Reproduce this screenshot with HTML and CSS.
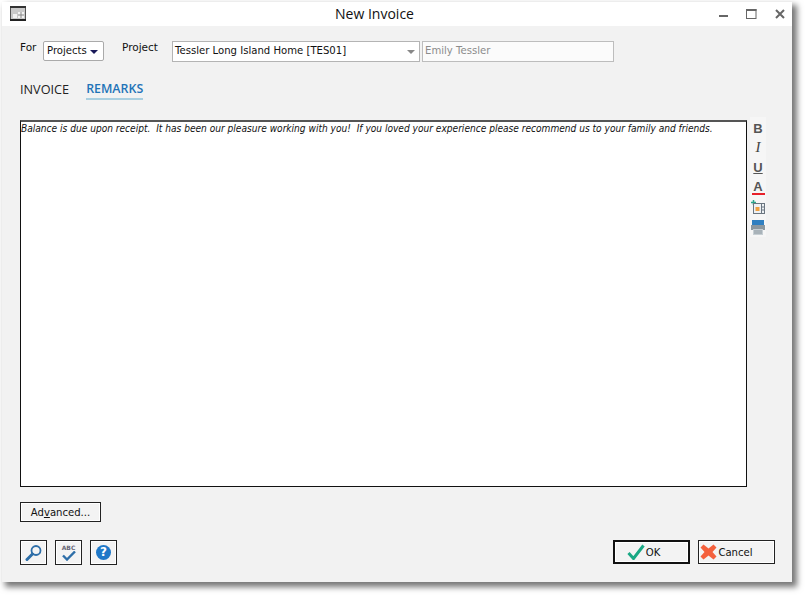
FILE: index.html
```html
<!DOCTYPE html>
<html lang="en">
<head>
<meta charset="utf-8">
<title>New Invoice</title>
<link rel="stylesheet" href="styles.css">
</head>
<body>
<div class="window">
  <header class="titlebar">
    <svg class="app-icon" width="16" height="15" viewBox="0 0 16 15"><rect x="0.5" y="0.5" width="15" height="14" fill="#c9c9c9" stroke="#555"/><rect x="0" y="0" width="16" height="2" fill="#333"/><rect x="0" y="13" width="16" height="2" fill="#222"/><rect x="8" y="6" width="6" height="6" fill="#f2f2f2"/><rect x="3" y="8" width="4" height="4" fill="#f2f2f2"/><path d="M8 9h6M11 6v6" stroke="#888" stroke-width="1"/></svg>
    <div class="title">New Invoice</div>
    <div class="win-controls">
      <svg width="10" height="10" viewBox="0 0 10 10"><rect x="0" y="6" width="9" height="2" fill="#666"/></svg>
      <svg width="11" height="11" viewBox="0 0 11 11"><rect x="0.500" y="0.500" width="9.500" height="9" fill="none" stroke="#666"/><rect x="0" y="0" width="10.500" height="2" fill="#666"/></svg>
      <svg width="10" height="10" viewBox="0 0 10 10"><path d="M1 1l8 8M9 1l-8 8" stroke="#666" stroke-width="2"/></svg>
    </div>
  </header>
  <main class="content">
    <div class="top-row">
      <span class="label label-for">For</span>
      <div class="select"><span>Projects</span><i class="caret caret-dark"></i></div>
      <span class="label label-project">Project</span>
      <div class="combo"><span>Tessler Long Island Home [TES01]</span><i class="caret"></i></div>
      <div class="readonly">Emily Tessler</div>
    </div>
    <nav class="tabs">
      <span class="tab">INVOICE</span>
      <span class="tab tab-active">REMARKS</span>
    </nav>
    <div class="editor-row">
      <div class="editor">Balance is due upon receipt.&nbsp; It has been our pleasure working with you!&nbsp; If you loved your experience please recommend us to your family and friends.</div>
      <div class="toolbar">
        <span class="tool tool-b">B</span>
        <span class="tool tool-i">I</span>
        <span class="tool tool-u">U</span>
        <span class="tool tool-a">A</span>
        <span class="tool"><svg width="14" height="14" viewBox="0 0 14 14"><path d="M0 2.500h5M2.500 0v5" stroke="#2aa58a" stroke-width="1.500"/><rect x="2.500" y="3.500" width="11" height="10" fill="#eef1f4" stroke="#6b7680"/><rect x="4.500" y="7" width="4" height="4" fill="#f0a040"/><path d="M10.500 4v9M10.500 7h3M10.500 10h3" stroke="#6b7680"/></svg></span>
        <span class="tool"><svg width="14" height="15" viewBox="0 0 14 15"><rect x="1" y="0" width="12" height="5" fill="#2f7fc1"/><rect x="0" y="5" width="14" height="5" fill="#8b979f"/><rect x="2" y="9" width="10" height="6" fill="#c6ced3"/><path d="M3 11h8M3 13h8" stroke="#8b979f"/></svg></span>
      </div>
    </div>
    <div class="advanced-row"><button class="btn btn-adv" type="button">Ad<u>v</u>anced...</button></div>
    <footer class="footer">
      <div class="icon-btns">
        <button class="btn icon-btn" type="button"><svg width="18" height="18" viewBox="0 0 18 18"><circle cx="11" cy="6.500" r="4.500" fill="none" stroke="#2d6ea8" stroke-width="1.800"/><path d="M7.500 10L2 15.500" stroke="#2d6ea8" stroke-width="3" stroke-linecap="round"/></svg></button>
        <button class="btn icon-btn spell" type="button"><span class="abc">ABC</span><svg width="16" height="10" viewBox="0 0 16 10"><path d="M2 4.500l4 4 8-8" fill="none" stroke="#2d6ea8" stroke-width="2.400"/></svg></button>
        <button class="btn icon-btn" type="button"><span class="help">?</span></button>
      </div>
      <div class="action-btns">
        <button class="btn btn-action btn-ok" type="button"><svg width="18" height="16" viewBox="0 0 18 16"><path d="M1.500 9l5 5.500L16.500 1.500" fill="none" stroke="#19a884" stroke-width="3"/></svg><span>OK</span></button>
        <button class="btn btn-action btn-cancel" type="button"><svg width="17" height="16" viewBox="0 0 17 16"><path d="M3.500 0.500L8.500 4.500L13.500 0.500L16.500 3.500L12.500 8L16.500 12.500L13.500 15.500L8.500 11.500L3.500 15.500L0.500 12.500L4.500 8L0.500 3.500Z" fill="#f4603c"/></svg><span>Cancel</span></button>
      </div>
    </footer>
  </main>
</div>
</body>
</html>
```
FILE: styles.css
```css
* { box-sizing: border-box; }
html, body { margin: 0; padding: 0; background: #fff; }
body { width: 805px; height: 595px; overflow: hidden; font-family: "DejaVu Sans", sans-serif; font-size: 10.100px; color: #111; }
.window { margin: 2px 0 0 2px; width: 790px; height: 580px; background: #f2f2f2; box-shadow: 4px 4px 6px 1px #777; display: flex; flex-direction: column; }
.titlebar { height: 24px; background: #fff; display: flex; align-items: center; padding: 0 7px 0 8px; position: relative; flex: none; }
.app-icon { margin-top: -1px; }
.title { position: absolute; left: 0; right: 45px; text-align: center; font: 14px "Open Sans", sans-serif; color: #111; top: 2px; }
.win-controls { margin-left: auto; display: flex; align-items: center; gap: 18px; padding-right: 0; }
.win-controls svg:first-child { margin-right: -1px; }
.content { flex: 1; display: flex; flex-direction: column; padding: 15px 17px 17px 18px; }
.top-row { display: flex; height: 21px; align-items: flex-start; }
.label { font-size: 10.500px; line-height: 13px; margin-top: 0; }
.label-for { width: 23px; }
.label-project { margin-left: 18px; width: 50px; }
.select { width: 61px; height: 20px; border: 1px solid #aaa; border-radius: 2px; background: #fff; display: flex; align-items: center; padding: 0 5px 1px 3px; justify-content: space-between; }
.combo { width: 248px; height: 21px; border: 1px solid #b4b4b4; background: #fff; display: flex; align-items: center; padding: 0 4px 2px 2px; justify-content: space-between; }
.readonly { margin-left: 2px; width: 192px; height: 21px; border: 1px solid #bdbdbd; background: #fbfbfb; color: #8c8c8c; display: flex; align-items: center; padding: 0 0 2px 2px; }
.caret { width: 0; height: 0; border: 4px solid transparent; border-top-color: #888; border-bottom: 0; margin-top: 2px; }
.caret-dark { border-top-color: #1a1a5a; }
.tabs { display: flex; gap: 17px; margin-top: 14px; height: 24px; font-family: "Open Sans", sans-serif; }
.tab { height: 24px; padding-top: 5px; line-height: 16px; color: #222; font-size: 12.700px; }
.tab-active { color: #1f74b8; font-weight: 600; font-size: 12.400px; border-bottom: 2px solid #a9cfe0; }
.editor-row { display: flex; margin-top: 20px; height: 367px; }
.editor { width: 727px; height: 367px; border: 1px solid #111; border-top: 2px solid #555; background: #fff; padding: 0 0; font-size: 10.080px; font-stretch: condensed; font-style: italic; line-height: 13px; white-space: nowrap; font-family: "DejaVu Sans", sans-serif; }
.toolbar { display: flex; flex-direction: column; margin: -3px 0 0 3px; }
.tool { width: 16px; height: 20px; flex: none; display: flex; align-items: center; justify-content: center; font-size: 13px; color: #555; background: #f6f6f6; }
.tool-b { font-weight: 700; font-family: "Liberation Sans", sans-serif; padding-top: 2px; }
.tool-i { font-style: italic; font-size: 15px; color: #444; font-family: "Liberation Serif", serif; }
.tool-u { text-decoration: underline; font-weight: 700; font-family: "Liberation Sans", sans-serif; }
.tool-a { font-weight: 700; font-family: "Liberation Sans", sans-serif; padding-bottom: 1px; background: #f6f6f6 linear-gradient(#e8202a, #e8202a) no-repeat center 16px / 13px 2px; }
.advanced-row { margin-top: 15px; height: 20px; flex: none; }
.btn { border: 1px solid #222; background: #f3f3f3; padding: 0; font: inherit; color: #111; display: flex; align-items: center; justify-content: center; box-shadow: inset 0 0 0 1px #fff; }
.btn-adv { width: 81px; height: 20px; }
.footer { display: flex; justify-content: space-between; margin-top: 18px; }
.icon-btns { display: flex; gap: 8px; }
.icon-btn { width: 27px; height: 25px; }
.spell { flex-direction: column; }
.abc { font-size: 6px; line-height: 7px; font-weight: 700; color: #667; }
.help { width: 15px; height: 15px; border-radius: 50%; background: #1f78c8; color: #fff; font-weight: 700; font-size: 12px; line-height: 15px; text-align: center; }
.action-btns { display: flex; gap: 8px; }
.btn-action { width: 77px; height: 24px; gap: 1px; }
.btn-ok { border-width: 2px; border-color: #111; padding-right: 16px; }
.btn-cancel { padding-right: 20px; }
```
